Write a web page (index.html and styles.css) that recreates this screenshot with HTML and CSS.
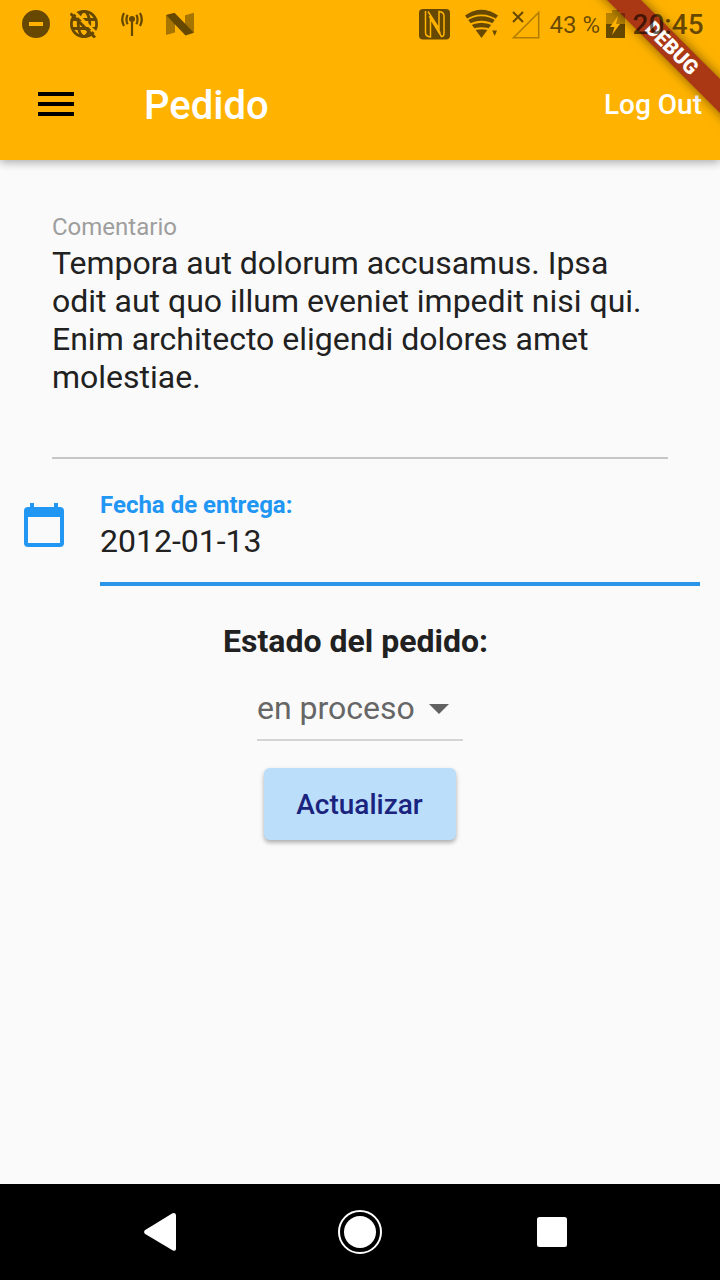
FILE: index.html
```html
<!DOCTYPE html>
<html lang="es">
<head>
<meta charset="utf-8">
<title>Pedido</title>
<link rel="stylesheet" href="styles.css">
</head>
<body>
<div class="screen">
  <header class="header">
    <div class="status">
      <div class="status-left">
        <svg class="ic28" viewBox="0 0 28 28"><path fill-rule="evenodd" d="M14 0a14 14 0 1 0 0 28a14 14 0 0 0 0-28zM7 12h14v4H7z"/></svg>
        <svg class="ic28 solid" viewBox="0 0 28 28"><g fill="none" stroke="currentColor" stroke-width="2.8"><circle cx="14" cy="14" r="12.600"/><ellipse cx="14" cy="14" rx="5.800" ry="12.600"/><path d="M2 9.500H26M2 18.500H26"/></g><path class="gap" d="M2.500 0L28 24.500"/><path fill="none" stroke="currentColor" stroke-width="3" d="M.500 3.500L25 27.500"/></svg>
        <svg class="ic28" viewBox="0 0 28 28"><circle cx="14" cy="9" r="3"/><path d="M12.900 12h2.200v14h-2.200z"/><path fill="none" stroke="currentColor" stroke-width="2.200" d="M9.600 4.800Q7.200 9.500 9.600 14.200M18.400 4.800Q20.800 9.500 18.400 14.200M6 3Q2.400 9.500 6 16M22 3Q25.600 9.500 22 16"/></svg>
        <svg class="ic28" viewBox="0 0 28 28"><path opacity=".58" d="M0 5L9 14V22.500L0 25zM28 2.700V22.700L19 13.700V5.200z"/><path d="M0 5L8.500 2.700L28 22.700L19.500 25.500z"/></svg>
      </div>
      <div class="status-right">
        <svg class="nfc solid" viewBox="0 0 32 32"><rect x="0" y="1" width="31" height="30.500" rx="4"/><path class="tag" d="M6.500 3V24.500Q6.500 28.500 11.500 29V10.500L22.500 28.500Q25 29 25 25V8Q25 4 20 3.500V20.500L9 3.500"/><path class="tag-core" d="M10.500 8L21 25"/></svg>
        <svg class="wifi solid" viewBox="0 0 34 30"><path d="M0 6.500Q16.500-5 33 6.500L16.500 29z"/><path class="waves" d="M0 12Q16.500 .800 33 12M3 16.500Q16.500 9 30 16.500M6 21.500Q16.500 17 27 21.500"/><path d="M27.300 21.500H32L29.600 27z"/></svg>
        <svg class="signal" viewBox="0 0 30 30"><path fill="none" stroke="currentColor" stroke-width="1.600" opacity=".5" d="M2.500 28.700H27.700V3.500z"/><path fill="none" stroke="currentColor" stroke-width="2" d="M2 3L12 13M12 3L2 13"/></svg>
        <span class="percent">43 %</span>
        <svg class="battery" viewBox="0 0 19 28"><path opacity=".45" d="M6 0H13V3H19V14H0V3H6z"/><path d="M0 14H19V28H0z"/><path class="bolt" d="M12 6L4 17H8.500L6 25L14 14H10z"/></svg>
        <span class="clock">20:45</span>
      </div>
    </div>
    <div class="toolbar">
      <svg class="menu" viewBox="0 0 36 24"><path d="M0 0H36V4H0zM0 10H36V14H0zM0 20H36V24H0z"/></svg>
      <h1 class="title">Pedido</h1>
      <span class="logout">Log Out</span>
    </div>
    <div class="ribbon-clip"><div class="ribbon">DEBUG</div></div>
  </header>
  <main class="form">
    <section class="comment">
      <div class="label">Comentario</div>
      <div class="text">Tempora aut dolorum accusamus. Ipsa<br>odit aut quo illum eveniet impedit nisi qui.<br>Enim architecto eligendi dolores amet<br>molestiae.</div>
    </section>
    <section class="date">
      <svg class="calendar" viewBox="0 0 40 44"><path fill-rule="evenodd" d="M6 0H10V4H30V0H34V4H36Q40 4 40 8V40Q40 44 36 44H4Q0 44 0 40V8Q0 4 4 4H6zM4 14V40H36V14z"/></svg>
      <div class="date-field">
        <div class="date-label">Fecha de entrega:</div>
        <div class="text">2012-01-13</div>
      </div>
    </section>
    <h2 class="state-title">Estado del pedido:</h2>
    <div class="select"><span>en proceso</span><svg class="arrow" viewBox="0 0 20 10"><path d="M0 0H20L10 10z"/></svg></div>
    <button class="update">Actualizar</button>
  </main>
  <nav class="nav">
    <svg class="nav-icon" viewBox="0 0 48 48"><path d="M.800 22.200L28.500 5.300Q32 4 32 7.500V40.500Q32 44 28.500 42.200L.800 25.800Q-.800 24 .800 22.200z"/></svg>
    <svg class="nav-icon" viewBox="0 0 48 48"><circle cx="24" cy="24" r="16"/><circle cx="24" cy="24" r="21" fill="none" stroke="currentColor" stroke-width="2"/></svg>
    <svg class="nav-icon" viewBox="0 0 48 48"><rect x="9" y="9" width="30" height="30" rx="2.500"/></svg>
  </nav>
</div>
</body>
</html>
```
FILE: styles.css
```css
* { box-sizing: border-box; }
body { margin: 0; font-family: Roboto, "Noto Sans", sans-serif; color: #212121; }
svg { display: block; fill: currentColor; flex: none; }
.screen { width: 720px; height: 1280px; display: flex; flex-direction: column; background: #fafafa; overflow: hidden; }
.header { position: relative; height: 160px; background: #ffb300; box-shadow: 0 3px 8px rgba(0,0,0,.22), 0 2px 10px rgba(0,0,0,.1); flex: none; }
.status { position: relative; z-index: 2; height: 48px; display: flex; justify-content: space-between; padding: 0 16px 0 22px; color: rgba(0,0,0,.6); }
.status-left, .status-right { display: flex; align-items: center; }
.status-left { gap: 20px; }
.solid { color: #664800; }
.gap { fill: none; stroke: #ffb300; stroke-width: 2.6; }
.tag { fill: none; stroke: #ffb300; stroke-width: 1.5; }
.tag-core { fill: none; stroke: #ffb300; stroke-width: 2; }
.waves { fill: none; stroke: #ffb300; stroke-width: 1.8; }
.ic28 { width: 28px; height: 28px; }
.nfc { width: 32px; height: 32px; margin-right: 14px; }
.wifi { width: 34px; height: 30px; margin-right: 12px; }
.signal { width: 30px; height: 30px; margin-right: 9px; }
.percent { width: 50px; font-size: 24px; line-height: 48px; padding-top: 2px; white-space: nowrap; }
.battery { width: 19px; height: 28px; margin: 0 8px 0 6px; }
.bolt { fill: #ffb300; }
.clock { width: 71.5px; font-size: 28px; font-weight: 500; line-height: 48px; padding-top: 2px; }
.toolbar { height: 112px; display: flex; align-items: center; padding: 0 18px 0 38px; color: #fff; }
.menu { width: 36px; height: 24px; color: #000; }
.title { margin: 0 auto 0 70px; font-size: 40px; font-weight: 500; line-height: 48px; padding-top: 3px; }
.logout { font-size: 28px; font-weight: 500; line-height: 34px; padding-top: 1px; }
.ribbon-clip { position: absolute; z-index: 1; top: 0; right: 0; width: 160px; height: 160px; overflow: hidden; }
.ribbon { position: absolute; left: 12px; top: 35.5px; width: 200px; height: 24px; transform: rotate(45deg); background: #ab3814; box-shadow: 0 0 12px rgba(0,0,0,.5); color: #fff; font-size: 20.4px; font-weight: 900; line-height: 24px; text-align: center; }
.form { flex: 1; display: flex; flex-direction: column; align-items: center; }
.comment { width: 616px; height: 299px; padding-top: 53px; border-bottom: 2px solid #c6c6c6; }
.label { font-size: 24px; line-height: 28px; color: #9e9e9e; }
.text { font-size: 32px; line-height: 38px; white-space: nowrap; }
.comment .text { padding-top: 3px; }
.date { width: 720px; display: flex; padding: 32px 20px 0 24px; }
.calendar { width: 40px; height: 44px; margin: 12px 36px 0 0; color: #2196f3; }
.date-field { flex: 1; height: 95px; border-bottom: 4px solid #2b95e9; }
.date-label { font-size: 24px; line-height: 28px; font-weight: 700; color: #2196f3; }
.date .text { padding-top: 3px; }
.state-title { margin: 36px 9px 0 0; font-size: 32px; font-weight: 700; line-height: 38px; }
.select { width: 206px; height: 65px; margin-top: 16px; display: flex; border-bottom: 2px solid #d4d4d4; font-size: 32px; line-height: 64px; color: #666; white-space: nowrap; justify-content: space-between; align-items: center; padding-right: 14px; }
.arrow { width: 20px; height: 10px; margin-top: 2px; color: #616161; }
.update { width: 192px; height: 72px; margin-top: 27px; padding: 1px 1px 0 0; border: 0; border-radius: 6px; background: #bbdefb; color: #1a237e; box-shadow: 0 3px 4px rgba(0,0,0,.25), 0 1px 5px rgba(0,0,0,.08); font: 500 28px Roboto, sans-serif; }
.nav { height: 96px; flex: none; background: #000; color: #fff; display: flex; align-items: center; justify-content: center; gap: 144px; }
.nav-icon { width: 48px; height: 48px; overflow: visible; }
```
